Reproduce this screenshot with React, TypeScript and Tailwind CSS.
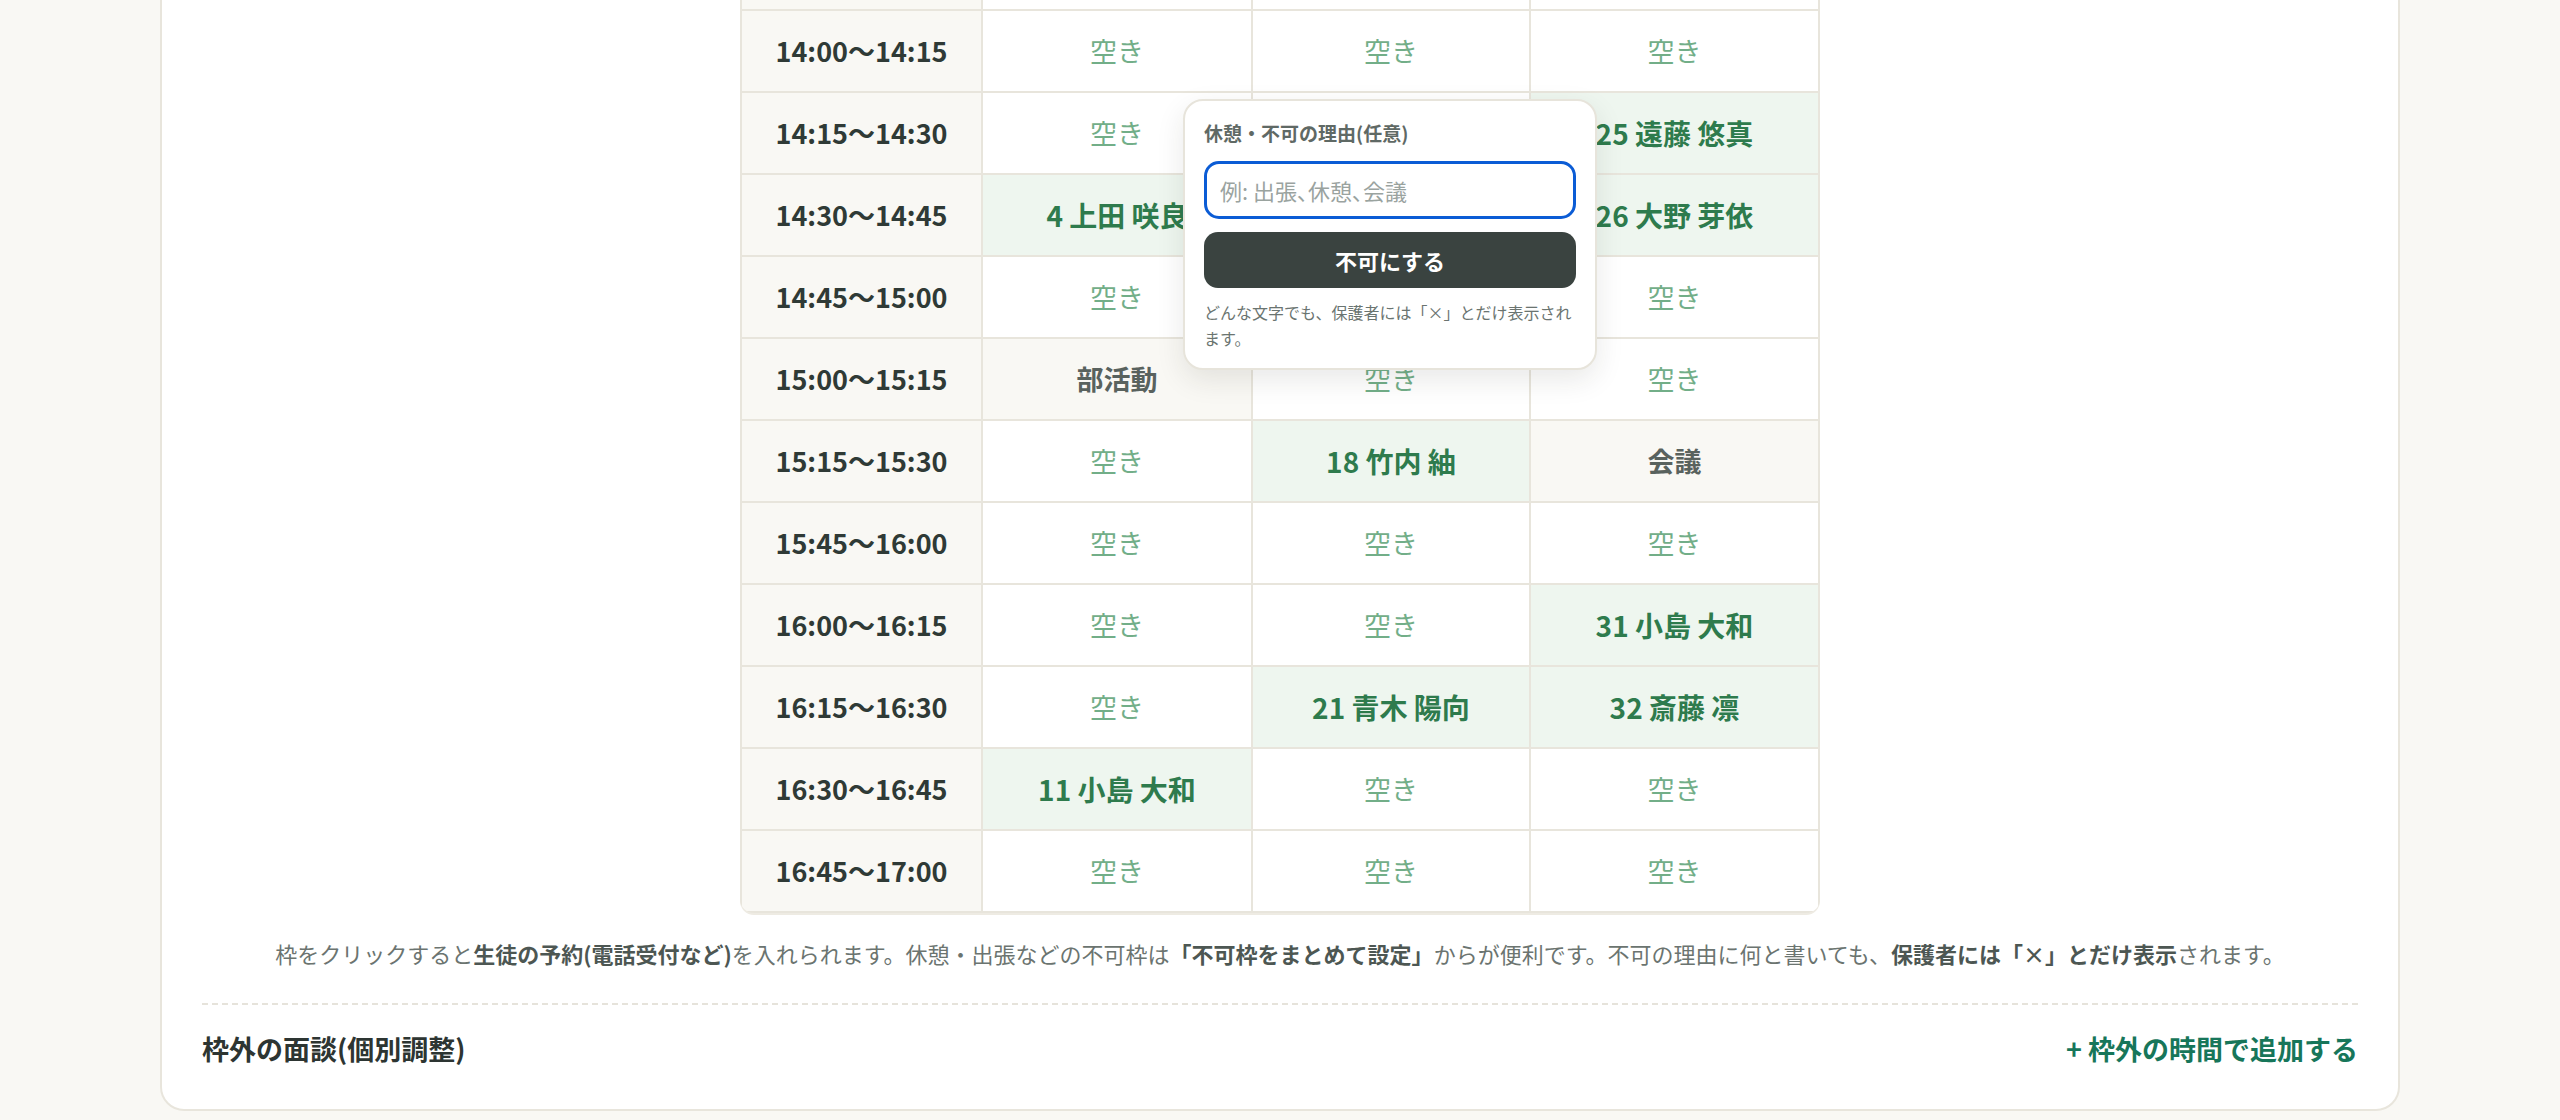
import React from "react";

type Slot =
  | { kind: "free" }
  | { kind: "booked"; label: string }
  | { kind: "blocked"; label: string };

const F: Slot = { kind: "free" };
const b = (label: string): Slot => ({ kind: "booked", label });
const x = (label: string): Slot => ({ kind: "blocked", label });

const rows: { time: string; slots: Slot[] }[] = [
  { time: "13:45〜14:00", slots: [F, F, F] },
  { time: "14:00〜14:15", slots: [F, F, F] },
  { time: "14:15〜14:30", slots: [F, F, b("25 遠藤 悠真")] },
  { time: "14:30〜14:45", slots: [b("4 上田 咲良"), F, b("26 大野 芽依")] },
  { time: "14:45〜15:00", slots: [F, F, F] },
  { time: "15:00〜15:15", slots: [x("部活動"), F, F] },
  { time: "15:15〜15:30", slots: [F, b("18 竹内 紬"), x("会議")] },
  { time: "15:45〜16:00", slots: [F, F, F] },
  { time: "16:00〜16:15", slots: [F, F, b("31 小島 大和")] },
  { time: "16:15〜16:30", slots: [F, b("21 青木 陽向"), b("32 斎藤 凛")] },
  { time: "16:30〜16:45", slots: [b("11 小島 大和"), F, F] },
  { time: "16:45〜17:00", slots: [F, F, F] },
];

function SlotCell({ slot }: { slot: Slot }) {
  if (slot.kind === "booked") {
    return (
      <div className="h-[80px] flex items-center justify-center bg-[#eef6ef] text-[28px] font-bold text-[#2e7b4d]">
        {slot.label}
      </div>
    );
  }
  if (slot.kind === "blocked") {
    return (
      <div className="h-[80px] flex items-center justify-center bg-[#f9f8f4] text-[27px] font-bold text-[#59625e]">
        {slot.label}
      </div>
    );
  }
  return (
    <div className="h-[80px] flex items-center justify-center bg-white text-[27px] text-[#72ae88]">
      空き
    </div>
  );
}

/* ── 不可理由のポップオーバー ── */
function ReasonPopover() {
  return (
    <div className="absolute left-[443px] top-[172px] w-[414px] z-10 rounded-[20px] border-2 border-[#e7e4db] bg-white px-[19px] pt-[19px] pb-[17px] shadow-[0_10px_28px_rgba(40,40,30,0.10)]">
      <div className="text-[19px] leading-[26px] font-bold text-[#5f6965]">休憩・不可の理由(任意)</div>
      <input
        autoFocus
        placeholder="例: 出張、休憩、会議"
        className="mt-[15px] block w-full h-[58px] rounded-[15px] border-[3px] border-[#0b5cd5] px-[13px] text-[22px] text-[#2f3a36] outline-none placeholder:text-[#9aa39f] [font-feature-settings:'palt']"
      />
      <button className="mt-[13px] w-full h-[56px] rounded-[14px] bg-[#3a4340] text-[22px] font-bold text-white">
        不可にする
      </button>
      <p className="mt-[11px] text-[16px] leading-[26px] text-[#6a7470]">
        どんな文字でも、保護者には「×」とだけ表示されます。
      </p>
    </div>
  );
}

export default function App() {
  return (
    <div className="h-[1120px] overflow-hidden bg-[#f9f8f4] px-[160px] font-['Noto_Sans_CJK_JP',sans-serif]">
      <div className="mt-[-120px] rounded-[24px] border-2 border-[#e8e5dc] bg-white px-[40px] pt-[45px] pb-[40px]">
        {/* ── 枠テーブル ── */}
        <div className="relative mx-auto w-[1080px]">
          <div className="grid grid-cols-[239px_268px_276px_287px] gap-[2px] p-[2px] bg-[#e8e5dc] rounded-b-[14px] overflow-hidden shadow-[0_2px_0_#eeebe3]">
            {rows.map((r) => (
              <React.Fragment key={r.time}>
                <div className="h-[80px] flex items-center justify-center bg-[#f9f8f4] text-[27px] font-bold text-[#2f3a36]">
                  {r.time}
                </div>
                {r.slots.map((s, i) => (
                  <SlotCell key={i} slot={s} />
                ))}
              </React.Fragment>
            ))}
          </div>
          <ReasonPopover />
        </div>

        <p className="mt-[24px] text-center text-[22px] leading-[33px] text-[#6b7470]">
          枠をクリックすると<b className="font-bold text-[#4d5753]">生徒の予約(電話受付など)</b>を入れられます。休憩・出張などの不可枠は
          <b className="font-bold text-[#4d5753]">「不可枠をまとめて設定」</b>からが便利です。不可の理由に何と書いても、
          <b className="font-bold text-[#4d5753]">保護者には「×」とだけ表示</b>されます。
        </p>

        <div className="mt-[33px] border-t-2 border-dashed border-[#e6e3db]" />

        {/* ── 枠外の面談 ── */}
        <div className="mt-[24px] flex items-center justify-between">
          <h3 className="text-[27px] leading-[40px] font-bold text-[#2d3532]">枠外の面談(個別調整)</h3>
          <button className="text-[27px] leading-[40px] font-bold text-[#17765a]">+ 枠外の時間で追加する</button>
        </div>
      </div>
    </div>
  );
}
